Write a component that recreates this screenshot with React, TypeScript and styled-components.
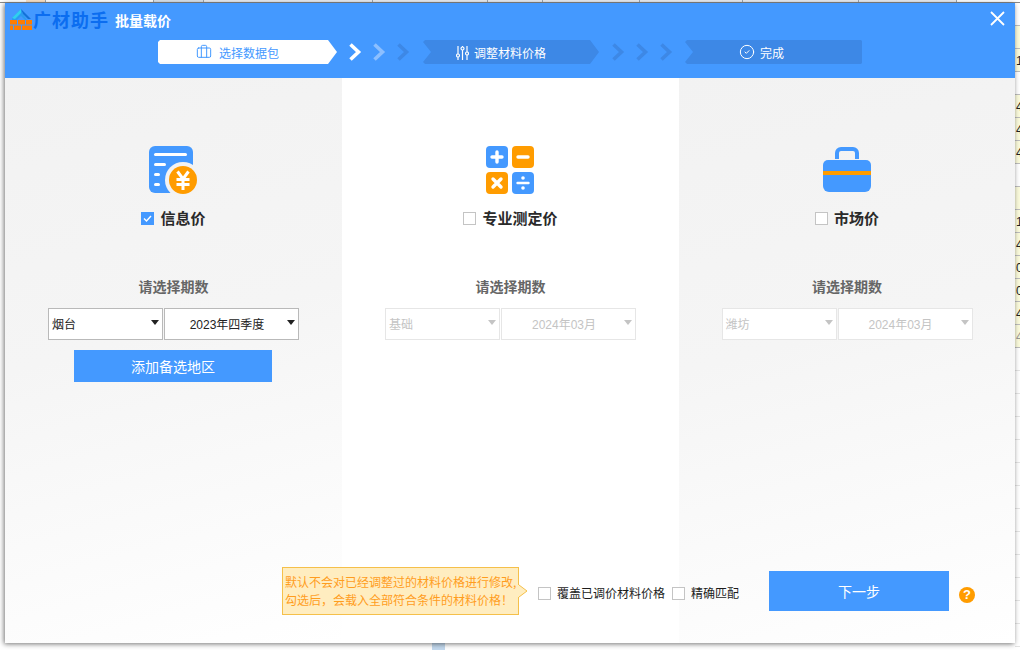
import styled, { createGlobalStyle } from "styled-components";
import { Briefcase, CircleCheck } from "lucide-react";

const BLUE = "#4499ff";
const DARK_BLUE = "#3d88e6";
const ORANGE = "#ff9c00";

const GlobalStyle = createGlobalStyle`
  html, body {
    margin: 0;
    padding: 0;
    background: #fff;
  }
  body {
    font-family: "Liberation Sans", "Noto Sans CJK SC", sans-serif;
    font-size: 12px;
  }
`;

const Page = styled.div`
  position: relative;
  width: 1020px;
  height: 650px;
  overflow: hidden;
  padding: 3px 5px 7px;
  box-sizing: border-box;
`;

// the spreadsheet behind the dialog, only its edges show
const SheetTop = styled.div`
  position: absolute;
  top: 0;
  left: 0;
  right: 0;
  height: 2px;
  display: flex;
  padding-left: 26px;
  border-bottom: 1px solid #8a8a8a;
`;
const TopCell = styled.div<{ $w: number; $bg: string }>`
  width: ${(p) => p.$w}px;
  flex: none;
  box-sizing: border-box;
  background: ${(p) => p.$bg};
  border-right: 1px solid #9aa5b1;
`;
const SheetRight = styled.div`
  position: absolute;
  top: 3px;
  right: 0;
  width: 5px;
  overflow: hidden;
  display: flex;
  flex-direction: column;
`;
const SheetCell = styled.div<{ $plain?: boolean; $faded?: boolean; $empty?: boolean }>`
  height: 22px;
  flex: none;
  padding-left: 1px;
  background: ${(p) => (p.$plain ? "#fff" : "#fbfbdc")};
  border-bottom: 1px solid ${(p) => (p.$empty ? "#e4e4e4" : "#bdbdbd")};
  color: ${(p) => (p.$faded ? "#999" : "#222")};
  font-size: 12px;
  line-height: 24px;
`;
const SheetBlueCell = styled.div`
  position: absolute;
  left: 432px;
  bottom: 0;
  width: 13px;
  height: 7px;
  background: #c3d9ee;
`;

const Dialog = styled.div`
  position: relative;
  width: 1010px;
  height: 640px;
  display: flex;
  flex-direction: column;
  box-shadow: -1px 1px 5px rgba(0, 0, 0, 0.55);
`;

const Header = styled.header`
  height: 75px;
  flex: none;
  background: ${BLUE};
  position: relative;
`;
const TitleBar = styled.div`
  height: 34px;
  margin-bottom: 3px;
  display: flex;
  align-items: center;
  padding-left: 5px;
`;
const LogoMark = styled.svg`
  flex: none;
  margin-top: -2px;
`;
const LogoText = styled.span`
  color: #0b6df0;
  font-family: "Noto Sans CJK SC", sans-serif;
  font-size: 18px;
  line-height: 24px;
  font-weight: 700;
  letter-spacing: 1px;
  width: 82px;
  margin-top: -2px;
`;
const DialogTitle = styled.span`
  color: #fff;
  font-family: "Noto Sans CJK SC", sans-serif;
  font-size: 14px;
  font-weight: 700;
  line-height: 20px;
`;
const CloseButton = styled.button`
  position: absolute;
  top: 8px;
  right: 10px;
  width: 15px;
  height: 15px;
  padding: 0;
  border: 0;
  background: none;
  display: flex;
`;
const StepBar = styled.div`
  display: flex;
  align-items: center;
  height: 24px;
  padding-left: 153px;
`;
const Step = styled.div<{ $active?: boolean; $w: number; $notch?: boolean; $point?: boolean; $pad?: number }>`
  width: ${(p) => p.$w}px;
  height: 24px;
  flex: none;
  box-sizing: border-box;
  padding-right: ${(p) => p.$pad ?? 20}px;
  display: flex;
  align-items: center;
  justify-content: center;
  gap: ${(p) => (p.$active ? 7 : 5)}px;
  background: ${(p) => (p.$active ? "#fff" : DARK_BLUE)};
  color: ${(p) => (p.$active ? BLUE : "#fff")};
  font-family: "Noto Sans CJK SC", sans-serif;
  font-size: 12px;
  clip-path: polygon(
    2px 0,
    ${(p) => (p.$point ? "calc(100% - 9px) 0, 100% 50%, calc(100% - 9px) 100%" : "calc(100% - 1px) 0, 100% 1px, 100% calc(100% - 1px), calc(100% - 1px) 100%")},
    2px 100%,
    0 calc(100% - 2px),
    ${(p) => (p.$notch ? "8px 50%" : "0 50%")},
    0 2px
  );
`;
const Chevrons = styled.div<{ $left: number; $right: number }>`
  display: flex;
  gap: 11px;
  margin: 0 ${(p) => p.$right}px 0 ${(p) => p.$left}px;
`;

const Body = styled.main`
  flex: 1;
  display: grid;
  grid-template-columns: 337px 337px 336px;
  grid-template-rows: 1fr auto;
  min-height: 0;
`;
const Column = styled.section<{ $col: number; $shaded?: boolean }>`
  grid-column: ${(p) => p.$col};
  grid-row: 1 / span 2;
  display: flex;
  flex-direction: column;
  align-items: center;
  padding-top: 68px;
  background: ${(p) =>
    p.$shaded ? "linear-gradient(165deg, #f2f2f2 0%, #f5f5f5 45%, #ffffff 100%)" : "#fff"};
`;
const IconSlot = styled.div<{ $shift?: number }>`
  height: 48px;
  display: flex;
  justify-content: center;
  margin-right: ${(p) => p.$shift ?? 0}px;
`;
const CheckRow = styled.label`
  display: flex;
  align-items: center;
  gap: 6px;
  height: 14px;
  margin-top: 17px;
`;
const CheckBox = styled.span<{ $on?: boolean }>`
  width: 13px;
  height: 13px;
  flex: none;
  box-sizing: border-box;
  border: 1px solid ${(p) => (p.$on ? BLUE : "#c4c4c4")};
  background: ${(p) => (p.$on ? BLUE : "#fff")};
  display: flex;
`;
const CheckText = styled.span`
  font-family: "Noto Sans CJK SC", sans-serif;
  font-size: 15px;
  font-weight: 700;
  color: #2a2a2a;
  line-height: 14px;
  margin-top: -1px;
`;
const PeriodLabel = styled.div`
  margin-top: 51px;
  font-family: "Noto Sans CJK SC", sans-serif;
  font-size: 14px;
  font-weight: 700;
  color: #666;
  line-height: 20px;
`;
const SelectRow = styled.div`
  display: flex;
  gap: 1px;
  margin-top: 12px;
`;
const Select = styled.div<{ $w: number; $disabled?: boolean; $center?: boolean }>`
  position: relative;
  width: ${(p) => p.$w}px;
  height: 32px;
  box-sizing: border-box;
  border: 1px solid ${(p) => (p.$disabled ? "#e6e6e6" : "#b9b9b9")};
  background: #fff;
  color: ${(p) => (p.$disabled ? "#c4c4c4" : "#222")};
  font-family: "Liberation Sans", "Noto Sans CJK SC", sans-serif;
  font-size: 12px;
  line-height: 32px;
  padding: 0 ${(p) => (p.$center ? 12 : 0)}px 0 3px;
  text-align: ${(p) => (p.$center ? "center" : "left")};

  &::after {
    content: "";
    position: absolute;
    right: 3px;
    top: 11px;
    border-style: solid;
    border-width: 5px 4px 0;
    border-color: ${(p) => (p.$disabled ? "#c4c4c4" : "#222")} transparent transparent;
  }
`;
const AddButton = styled.button`
  width: 198px;
  height: 32px;
  margin: 10px 1px 0 0;
  border: 0;
  padding: 0;
  background: ${BLUE};
  color: #fff;
  font-family: "Noto Sans CJK SC", sans-serif;
  font-size: 14px;
`;

const Footer = styled.div`
  grid-column: 1 / -1;
  grid-row: 2;
  z-index: 1;
  display: flex;
  align-items: center;
  padding: 0 0 28px 277px;
`;
const Tip = styled.div`
  position: relative;
  width: 237px;
  height: 48px;
  box-sizing: border-box;
  margin-right: 19px;
  padding: 5px 0 0 2px;
  border: 1px solid #f5c04a;
  background: #ffedc0;
  color: #ff9d1e;
  font-family: "Noto Sans CJK SC", sans-serif;
  font-size: 12px;
  line-height: 18px;
  white-space: nowrap;
`;
const TipArrow = styled.svg`
  position: absolute;
  top: 16px;
  right: -10px;
`;
const FooterCheck = styled.label<{ $gap: number }>`
  display: flex;
  align-items: center;
  gap: 6px;
  margin-top: 4px;
  margin-right: ${(p) => p.$gap}px;
  font-family: "Noto Sans CJK SC", sans-serif;
  font-size: 12px;
  color: #1c1c1c;
  line-height: 14px;
`;
const NextButton = styled.button`
  width: 180px;
  height: 40px;
  border: 0;
  padding: 0;
  background: ${BLUE};
  color: #fff;
  font-family: "Noto Sans CJK SC", sans-serif;
  font-size: 14px;
`;
const HelpBadge = styled.span`
  width: 16px;
  height: 16px;
  margin: 8px 0 0 10px;
  border-radius: 50%;
  background: ${ORANGE};
  color: #fff;
  font-size: 13px;
  font-weight: 700;
  line-height: 16px;
  text-align: center;
`;

const Chevron = ({ color }: { color: string }) => (
  <svg width="13" height="18" viewBox="0 0 13 18">
    <polyline points="1.5,1.5 9.5,9 1.5,16.5" fill="none" stroke={color} strokeWidth="3.6" />
  </svg>
);

const Logo = () => (
  <LogoMark width="23" height="21" viewBox="0 0 23 21">
    <path d="M11 0 L2 9 L2 11 L7 11 L11 7 L15 11 L17 11 L13 5 Z" fill="#2a9bf0" />
    <path d="M11 0 L2 9 L5 10 L11 4 Z" fill="#2fd0ee" />
    <path d="M11 0 L21 10 L18 10 L13 5 Z" fill="#1272d8" />
    <rect x="0" y="11" width="7" height="4.5" fill="#ff7d00" />
    <rect x="8" y="11" width="7" height="4.5" fill="#ff7d00" />
    <rect x="16" y="11" width="6" height="4.5" fill="#ff7d00" />
    <rect x="0" y="16.5" width="3" height="4.5" fill="#ff7d00" />
    <rect x="4" y="16.5" width="7" height="4.5" fill="#ff7d00" />
    <rect x="12" y="16.5" width="10" height="4.5" fill="#ff7d00" />
  </LogoMark>
);

const SlidersIcon = () => (
  <svg width="13" height="15" viewBox="0 0 13 15" fill="none" stroke="#fff" strokeWidth="1.2">
    <path d="M2 1V9M2 12V15M6.5 1V2M6.5 5V15M11 1V7M11 10V15" />
    <circle cx="2" cy="10.5" r="1.5" />
    <circle cx="6.5" cy="3.5" r="1.5" />
    <circle cx="11" cy="8.5" r="1.5" />
  </svg>
);

const PriceIcon = () => (
  <svg width="50" height="48" viewBox="0 0 50 48">
    <rect x="1" y="0" width="44" height="47" rx="6" fill={BLUE} />
    <rect x="6" y="7" width="33" height="3" rx="1.5" fill="#fff" />
    <rect x="6" y="17" width="12" height="3" rx="1.5" fill="#fff" />
    <rect x="6" y="27" width="6" height="3" rx="1.5" fill="#fff" />
    <rect x="6" y="37" width="6" height="3" rx="1.5" fill="#fff" />
    <circle cx="35" cy="34" r="18" fill="#f3f3f3" />
    <circle cx="35" cy="34" r="14" fill={ORANGE} />
    <path
      d="M29.5 25.5 L35 33 L40.5 25.5 M28.5 33.5 H41.5 M28.5 38.5 H41.5 M35 33 V44"
      fill="none"
      stroke="#fff"
      strokeWidth="3"
    />
  </svg>
);

const CalcIcon = () => (
  <svg width="48" height="48" viewBox="0 0 48 48">
    <rect x="0" y="0" width="22" height="22" rx="4" fill={BLUE} />
    <rect x="26" y="0" width="22" height="22" rx="4" fill={ORANGE} />
    <rect x="0" y="26" width="22" height="22" rx="4" fill={ORANGE} />
    <rect x="26" y="26" width="22" height="22" rx="4" fill={BLUE} />
    <g stroke="#fff" strokeWidth="3.4" strokeLinecap="round" fill="none">
      <path d="M6 11H16M11 6V16" />
      <path d="M32 11H42" />
      <path d="M7 33L15 41M15 33L7 41" />
    </g>
    <path d="M31.5 37H42.5" stroke="#fff" strokeWidth="2.4" strokeLinecap="round" />
    <circle cx="37" cy="32" r="1.8" fill="#fff" />
    <circle cx="37" cy="42" r="1.8" fill="#fff" />
  </svg>
);

const CaseIcon = () => (
  <svg width="48" height="48" viewBox="0 0 48 48">
    <path d="M14 13V7a4 4 0 0 1 4-4h12a4 4 0 0 1 4 4v6" fill="none" stroke={BLUE} strokeWidth="4" />
    <path d="M0 19a5 5 0 0 1 5-5h38a5 5 0 0 1 5 5v6H0Z" fill={BLUE} />
    <rect x="0" y="25" width="48" height="4" fill={ORANGE} />
    <path d="M0 29h48v11a6 6 0 0 1-6 6H6a6 6 0 0 1-6-6Z" fill={BLUE} />
  </svg>
);

const sheetRows = ["", "", "1", "", "4", "4", "4", "", "", "1", "4", "0", "0", "4", "4", "", "", "", "", "", "", "", "", "", "", "", "", "", ""];

const App = () => {
  return (
    <Page>
      <GlobalStyle />
      <SheetTop>
        <TopCell $w={20} $bg="#fbe3c8" />
        <TopCell $w={108} $bg="#fff" />
        <TopCell $w={50} $bg="#dbe3ec" />
        <TopCell $w={169} $bg="#e9edf2" />
        <TopCell $w={115} $bg="#e9edf2" />
        <TopCell $w={55} $bg="#e9edf2" />
        <TopCell $w={97} $bg="#e9edf2" />
        <TopCell $w={103} $bg="#e9edf2" />
        <TopCell $w={116} $bg="#e9edf2" />
        <TopCell $w={98} $bg="#e9edf2" />
      </SheetTop>
      <SheetRight>
        {sheetRows.map((t, i) => (
          <SheetCell
            key={i}
            $plain={i === 0 || i === 3 || i === 7 || i > 14}
            $faded={i === 14}
            $empty={i > 14}
          >
            {t}
          </SheetCell>
        ))}
      </SheetRight>
      <SheetBlueCell />

      <Dialog>
        <Header>
          <TitleBar>
            <Logo />
            <LogoText>广材助手</LogoText>
            <DialogTitle>批量载价</DialogTitle>
          </TitleBar>
          <CloseButton>
            <svg width="15" height="15" viewBox="0 0 15 15">
              <path d="M1 1L14 14M14 1L1 14" stroke="#fff" strokeWidth="1.8" />
            </svg>
          </CloseButton>
          <StepBar>
            <Step $active $point $w={179}>
              <Briefcase size={16} strokeWidth={1.5} />
              选择数据包
            </Step>
            <Chevrons $left={12} $right={13}>
              <Chevron color="#fff" />
              <Chevron color="#8cbfff" />
              <Chevron color={DARK_BLUE} />
            </Chevrons>
            <Step $notch $point $w={176}>
              <SlidersIcon />
              调整材料价格
            </Step>
            <Chevrons $left={13} $right={12}>
              <Chevron color={DARK_BLUE} />
              <Chevron color={DARK_BLUE} />
              <Chevron color={DARK_BLUE} />
            </Chevrons>
            <Step $notch $w={177} $pad={24}>
              <CircleCheck size={16} strokeWidth={1.5} />
              完成
            </Step>
          </StepBar>
        </Header>

        <Body>
          <Column $col={1} $shaded>
            <IconSlot $shift={1}>
              <PriceIcon />
            </IconSlot>
            <CheckRow>
              <CheckBox $on>
                <svg width="11" height="11" viewBox="0 0 11 11">
                  <path d="M2 5.5L4.5 8L9 3" fill="none" stroke="#fff" strokeWidth="1.4" />
                </svg>
              </CheckBox>
              <CheckText>信息价</CheckText>
            </CheckRow>
            <PeriodLabel>请选择期数</PeriodLabel>
            <SelectRow>
              <Select $w={115}>烟台</Select>
              <Select $w={135} $center>
                2023年四季度
              </Select>
            </SelectRow>
            <AddButton>添加备选地区</AddButton>
          </Column>

          <Column $col={2}>
            <IconSlot $shift={1}>
              <CalcIcon />
            </IconSlot>
            <CheckRow>
              <CheckBox />
              <CheckText>专业测定价</CheckText>
            </CheckRow>
            <PeriodLabel>请选择期数</PeriodLabel>
            <SelectRow>
              <Select $w={115} $disabled>
                基础
              </Select>
              <Select $w={135} $disabled $center>
                2024年03月
              </Select>
            </SelectRow>
          </Column>

          <Column $col={3} $shaded>
            <IconSlot>
              <CaseIcon />
            </IconSlot>
            <CheckRow>
              <CheckBox />
              <CheckText>市场价</CheckText>
            </CheckRow>
            <PeriodLabel>请选择期数</PeriodLabel>
            <SelectRow>
              <Select $w={115} $disabled>
                潍坊
              </Select>
              <Select $w={135} $disabled $center>
                2024年03月
              </Select>
            </SelectRow>
          </Column>

          <Footer>
            <Tip>
              默认不会对已经调整过的材料价格进行修改,
              <br />
              勾选后，会载入全部符合条件的材料价格！
              <TipArrow width="10" height="14" viewBox="0 0 10 14">
                <path d="M0 1 L1 1 L9 7 L1 13 L0 13 Z" fill="#ffedc0" />
                <path d="M1 1 L9 7 L1 13" fill="none" stroke="#f5c04a" />
              </TipArrow>
            </Tip>
            <FooterCheck $gap={7}>
              <CheckBox />
              覆盖已调价材料价格
            </FooterCheck>
            <FooterCheck $gap={30}>
              <CheckBox />
              精确匹配
            </FooterCheck>
            <NextButton>下一步</NextButton>
            <HelpBadge>?</HelpBadge>
          </Footer>
        </Body>
      </Dialog>
    </Page>
  );
};

export default App;
